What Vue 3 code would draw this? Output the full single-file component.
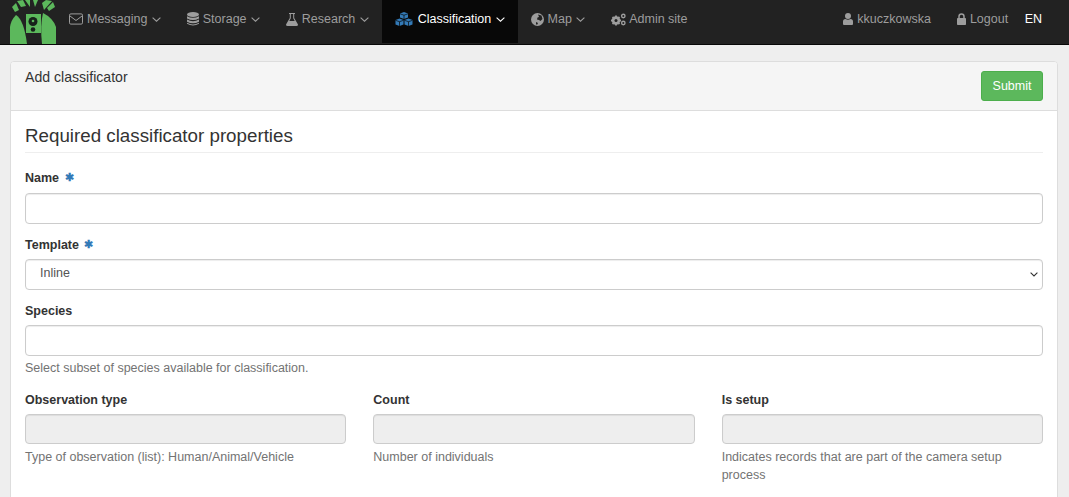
<script setup>
const leftMenu = [
  { label: "Messaging", icon: "envelope", caret: true },
  { label: "Storage", icon: "database", caret: true },
  { label: "Research", icon: "flask", caret: true },
  { label: "Classification", icon: "cubes", caret: true, active: true },
  { label: "Map", icon: "globe", caret: true },
  { label: "Admin site", icon: "cogs" },
];

const extraFields = [
  { label: "Observation type", help: "Type of observation (list): Human/Animal/Vehicle" },
  { label: "Count", help: "Number of individuals" },
  { label: "Is setup", help: "Indicates records that are part of the camera setup process" },
];
</script>

<template>
  <nav class="navbar">
    <a class="brand">
      <svg width="46" height="44" viewBox="0 0 46 44">
        <path fill="#5cb85c" d="M0 44V27Q1 20 6 15Q14 20 17 44Z" />
        <path fill="#5cb85c" d="M32 44Q30 25 33 13Q43 18 46 27V44Z" />
        <path fill="#5cb85c" d="M2 7L6 3L9 10L5 12Z" />
        <path fill="#5cb85c" d="M7 1L13 0L16 6L11 7Z" />
        <path fill="#5cb85c" d="M15 0H20L20 7Z" />
        <path fill="#5cb85c" d="M23 0H28L25 7Z" />
        <path fill="#5cb85c" d="M32 3L36 0L42 1L34 10Z" />
        <path fill="#5cb85c" d="M37 8L43 2L45 7L39 11Z" />
        <rect x="16" y="14" width="15" height="19" fill="#5cb85c" />
        <circle cx="23" cy="21.500" r="4.500" fill="#17231a" />
        <circle cx="23" cy="21" r="1.300" fill="#5cb85c" />
        <circle cx="23" cy="29.500" r="2.300" fill="#17231a" />
      </svg>
    </a>
    <ul class="nav">
      <li v-for="item in leftMenu" :key="item.label" :class="{ active: item.active }">
        <a>
          <svg v-if="item.icon === 'envelope'" class="ico" width="14" height="12" viewBox="0 0 14 12">
            <rect x="0.500" y="0.900" width="13" height="10.200" rx="1.300" fill="none" stroke="currentColor" />
            <path d="M1 3L7 7.500L13 3" fill="none" stroke="currentColor" />
          </svg>
          <svg v-else-if="item.icon === 'database'" class="ico" width="12" height="14" viewBox="0 0 12 14">
            <ellipse cx="6" cy="2.500" rx="6" ry="2.500" fill="currentColor" />
            <path fill="currentColor" d="M0 4.200Q6 7.500 12 4.200V6.400Q6 9.500 0 6.400ZM0 7.600Q6 10.800 12 7.600V9.700Q6 12.800 0 9.700ZM0 10.800Q6 14 12 10.800V11.800Q6 15.400 0 11.800Z" />
          </svg>
          <svg v-else-if="item.icon === 'flask'" class="ico" width="12" height="13" viewBox="0 0 12 13">
            <path fill="currentColor" d="M3 0H9V1H8.200V5L12 11.500Q12 13 10.500 13H1.500Q0 13 0 11.500L3.800 5V1H3ZM4.800 1V5.300L3.300 8H8.700L7.200 5.300V1Z" />
          </svg>
          <svg v-else-if="item.icon === 'cubes'" class="ico" width="18" height="14" viewBox="0 0 18 14">
            <path fill="currentColor" d="M9 0L13 1.500V5.500L9 7L5 5.500V1.500Z" />
            <path fill="currentColor" d="M4.500 6.500L8.500 8V12.500L4.500 14L0.500 12.500V8Z" />
            <path fill="currentColor" d="M13.500 6.500L17.500 8V12.500L13.500 14L9.500 12.500V8Z" />
            <path fill="none" stroke="#060606" stroke-width="0.700" d="M5 1.800L9 3.200L13 1.800M9 3.200V7M0.500 8.300L4.500 9.700L8.500 8.300M4.500 9.700V14M9.500 8.300L13.500 9.700L17.500 8.300M13.500 9.700V14" />
          </svg>
          <svg v-else-if="item.icon === 'globe'" class="ico" width="13" height="13" viewBox="0 0 13 13">
            <circle cx="6.500" cy="6.500" r="6.500" fill="currentColor" />
            <path fill="#222" d="M7 1.500L10.500 2.500L11.500 6L9.500 8L8 7L6 6.500L6.500 4.500L8 4ZM5 9L7 10L6 12L5 11Z" />
          </svg>
          <svg v-else-if="item.icon === 'cogs'" class="ico cogs" width="15" height="13" viewBox="0 0 15 13">
            <circle cx="5" cy="7.500" r="3" fill="none" stroke="currentColor" stroke-width="2.400" />
            <path stroke="currentColor" stroke-width="1.800" d="M5 2.500V12.500M0 7.500H10M1.500 4L8.500 11M8.500 4L1.500 11" />
            <circle cx="5" cy="7.500" r="1.500" fill="#222" />
            <circle cx="12.300" cy="3" r="1.700" fill="none" stroke="currentColor" stroke-width="1.400" />
            <circle cx="12.300" cy="10" r="1.700" fill="none" stroke="currentColor" stroke-width="1.400" />
          </svg>
          <span>{{ item.label }}</span>
          <svg v-if="item.caret" class="caret" width="9" height="5" viewBox="0 0 9 5">
            <path d="M0.600 0.600L4.500 4.200L8.400 0.600" fill="none" stroke="currentColor" stroke-width="1.100" />
          </svg>
        </a>
      </li>
    </ul>
    <ul class="nav nav-right">
      <li>
        <a>
          <svg class="ico" width="10" height="12" viewBox="0 0 10 12">
            <circle cx="5" cy="3" r="3" fill="currentColor" />
            <path fill="currentColor" d="M0 11V8.500Q0 6 2.500 6Q5 7.500 7.500 6Q10 6 10 8.500V11Q10 12 9 12H1Q0 12 0 11Z" />
          </svg>
          <span>kkuczkowska</span>
        </a>
      </li>
      <li>
        <a>
          <svg class="ico lock" width="9" height="12" viewBox="0 0 9 12">
            <path fill="none" stroke="currentColor" stroke-width="1.500" d="M2 6V3.500Q2 1 4.500 1Q7 1 7 3.500V6" />
            <rect y="5" width="9" height="7" rx="0.800" fill="currentColor" />
          </svg>
          <span>Logout</span>
        </a>
      </li>
      <li class="lang"><a>EN</a></li>
    </ul>
  </nav>

  <div class="page">
    <section class="panel">
      <header class="panel-heading">
        <span class="panel-title">Add classificator</span>
        <button class="btn-submit" type="button">Submit</button>
      </header>
      <div class="panel-body">
        <h4 class="legend">Required classificator properties</h4>

        <div class="group first">
          <label>Name <span class="req">✱</span></label>
          <input class="control" type="text" />
        </div>

        <div class="group">
          <label>Template <span class="req">✱</span></label>
          <div class="select-wrap">
            <select class="control select">
              <option>Inline</option>
            </select>
            <svg class="select-arrow" width="8" height="5" viewBox="0 0 8 5">
              <path d="M0.600 0.700L4 4L7.400 0.700" fill="none" stroke="#333" stroke-width="1.100" />
            </svg>
          </div>
        </div>

        <div class="group species">
          <label>Species</label>
          <input class="control" type="text" />
          <p class="help">Select subset of species available for classification.</p>
        </div>

        <div class="columns">
          <div v-for="f in extraFields" :key="f.label" class="group">
            <label>{{ f.label }}</label>
            <input class="control" type="text" disabled />
            <p class="help">{{ f.help }}</p>
          </div>
        </div>
      </div>
    </section>
  </div>
</template>

<style scoped>
.navbar {
  display: flex;
  align-items: flex-start;
  height: 44px;
  background: #222;
  border-bottom: 1px solid #080808;
  font-family: "Liberation Sans", Arial, sans-serif;
  font-size: 12.500px;
}

.brand {
  display: block;
  margin-left: 10px;
  width: 46px;
  height: 44px;
}

.brand svg {
  display: block;
}

.nav {
  display: flex;
  list-style: none;
  margin: 0;
  padding: 0;
}

.nav a {
  display: flex;
  align-items: center;
  height: 43px;
  box-sizing: border-box;
  padding: 0 13px 5px;
  color: #9d9d9d;
  white-space: nowrap;
}

.nav li.active a {
  background: #080808;
  color: #fff;
}

.nav li.active .ico {
  color: #337ab7;
  margin-right: 5px;
}

.ico {
  flex: none;
  margin-right: 4px;
}

.ico.cogs {
  margin-right: 3px;
}

.caret {
  margin-left: 4.300px;
  margin-top: 1px;
}

.nav-right {
  margin-left: auto;
}

.lang a {
  color: #fff;
  padding: 0 27px 5px 3.500px;
}

.page {
  padding: 16px 11px 0 10px;
}

.panel {
  background: #fff;
  border: 1px solid #ddd;
  border-radius: 4px 4px 0 0;
  font-family: "Liberation Sans", Arial, sans-serif;
  font-size: 12.500px;
  color: #333;
}

.panel-heading {
  display: flex;
  justify-content: space-between;
  align-items: flex-start;
  height: 49px;
  box-sizing: border-box;
  padding: 9px 14px 0;
  background: #f5f5f5;
  border-bottom: 1px solid #ddd;
  border-radius: 3px 3px 0 0;
}

.panel-title {
  font-size: 14.100px;
  line-height: 12px;
}

.btn-submit {
  height: 30px;
  width: 62px;
  padding: 0;
  font: inherit;
  color: #fff;
  background: #5cb85c;
  border: 1px solid #4cae4c;
  border-radius: 3px;
}

.panel-body {
  padding: 15px 14px 20px;
}

.legend {
  margin: 0 0 16px;
  padding-bottom: 6px;
  font-size: 18.750px;
  line-height: 20px;
  font-weight: 400;
  border-bottom: 1px solid #eee;
}

.group {
  margin-bottom: 13.500px;
}

.group.first {
  margin-bottom: 12.500px;
}

.group.first label {
  margin-bottom: 6px;
}

.species {
  margin-bottom: 15px;
}

label {
  display: block;
  margin-bottom: 5px;
  font-weight: 700;
  line-height: 17px;
}

.req {
  margin-left: 2px;
  color: #337ab7;
  font-size: 10.500px;
  vertical-align: 1px;
}

.control {
  display: block;
  width: 100%;
  height: 30.500px;
  box-sizing: border-box;
  padding: 0 14px;
  font: inherit;
  color: #555;
  background: #fff;
  border: 1px solid #ccc;
  border-radius: 4px;
  box-shadow: inset 0 1px 1px rgba(0, 0, 0, 0.075);
}

.control:disabled {
  background: #eee;
}

.select-wrap {
  position: relative;
}

.select {
  appearance: none;
  padding-bottom: 3px;
}

.select-arrow {
  position: absolute;
  right: 5px;
  top: 13px;
}

.help {
  margin: 3px 0 0;
  line-height: 18px;
  color: #737373;
}

.columns .help {
  margin-top: 4px;
}

.columns {
  display: grid;
  grid-template-columns: repeat(3, 1fr);
  gap: 27px;
}
</style>

<style>
html,
body {
  background: #eee;
}
</style>
